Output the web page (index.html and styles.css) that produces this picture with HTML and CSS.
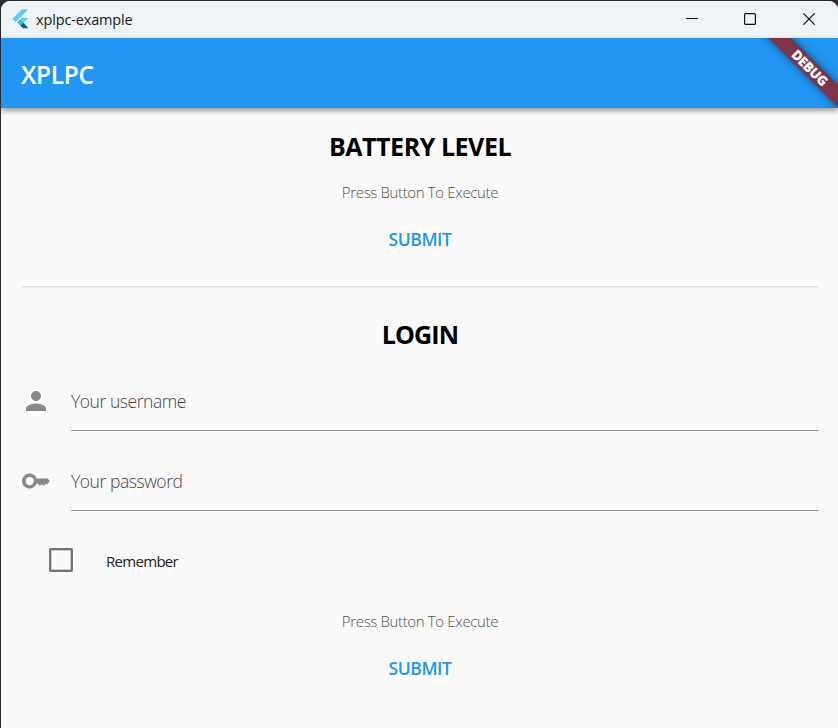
FILE: index.html
```html
<!DOCTYPE html>
<html lang="en">
<head>
<meta charset="utf-8">
<title>xplpc-example</title>
<link rel="stylesheet" href="styles.css">
</head>
<body>
<div class="window">
  <header class="titlebar">
    <svg class="logo" viewBox="0 0 18 20" width="18" height="20">
      <path d="M10 .3H16.3L3.6 13L.4 9.9Z" fill="#62c9f8"/>
      <path d="M10 9H16.3L8.6 16.6L5.4 13.6Z" fill="#62c9f8"/>
      <path d="M8.4 16.5L11.4 13.5L16.3 19.3H11Z" fill="#075b9d"/>
      <path d="M5.4 13.6L8.4 10.6L11.4 13.6L8.4 16.6Z" fill="#35b5f2"/>
    </svg>
    <span class="caption">xplpc-example</span>
    <div class="controls">
      <svg viewBox="0 0 12 12" width="12" height="12"><path d="M0 5.5H12"/></svg>
      <svg viewBox="0 0 12 12" width="12" height="12"><rect x=".6" y=".6" width="10.8" height="10.8" rx="1"/></svg>
      <svg viewBox="0 0 12 12" width="12" height="12"><path d="M.3 .3L11.7 11.7M11.7 .3L.3 11.7"/></svg>
    </div>
  </header>
  <div class="appbar">
    <h1>XPLPC</h1>
    <div class="corner"><div class="banner"><span>DEBUG</span></div></div>
  </div>
  <main>
    <h2 class="battery">BATTERY LEVEL</h2>
    <p class="hint">Press Button To Execute</p>
    <button>SUBMIT</button>
    <hr>
    <h2 class="login">LOGIN</h2>
    <label class="field">
      <svg viewBox="0 0 24 24" width="30" height="30"><path d="M12 12c2.21 0 4-1.79 4-4s-1.79-4-4-4-4 1.79-4 4 1.79 4 4 4zm0 2c-2.67 0-8 1.34-8 4v2h16v-2c0-2.66-5.33-4-8-4z"/></svg>
      <span class="input">Your username</span>
    </label>
    <label class="field">
      <svg viewBox="0 0 24 24" width="30" height="30"><path fill-rule="evenodd" d="M12.5 10A6 6 0 1 0 12.5 14H13.4L15 15.8L16.5 14.5L18 15.8L20 14.2L21 14.8L23 12L21.4 10ZM7 15.3A3.3 3.3 0 1 1 7 8.7A3.3 3.3 0 0 1 7 15.3Z"/></svg>
      <span class="input">Your password</span>
    </label>
    <label class="remember"><span class="box"></span><span>Remember</span></label>
    <p class="hint">Press Button To Execute</p>
    <button>SUBMIT</button>
  </main>
</div>
</body>
</html>
```
FILE: styles.css
```css
* { box-sizing: border-box; }
body {
  margin: 0;
  height: 728px;
  overflow: hidden;
  background: #2b2b2d;
  font-family: "Open Sans", "Noto Sans", sans-serif;
}
.window {
  margin: 1px 0 0 1px;
  height: 727px;
  background: #fafafa;
  border-radius: 9px 9px 0 0;
  overflow: hidden;
}
.titlebar {
  height: 37px;
  display: flex;
  align-items: center;
  background: #eff4f9;
  padding: 0 23px 1px 11px;
}
.logo { flex: none; }
.caption {
  margin-left: 6px;
  font-size: 14.5px;
  letter-spacing: -0.15px;
  color: #191919;
}
.controls {
  margin-left: auto;
  display: flex;
}
.controls svg {
  margin-left: 46px;
  fill: none;
  stroke: #111;
  stroke-width: 1.2;
}
.controls svg:last-child { margin-left: 47px; }
.appbar {
  position: relative;
  height: 70px;
  display: flex;
  align-items: center;
  padding: 2px 0 0 20px;
  background: #2196f3;
  box-shadow: 0 2px 5px rgba(0, 0, 0, .3), 0 4px 6px rgba(0, 0, 0, .14);
}
.appbar h1 {
  margin: 0;
  font-size: 24.5px;
  font-weight: 600;
  letter-spacing: -0.3px;
  color: #fff;
}
.corner {
  position: absolute;
  top: 0;
  right: 0;
  width: 110px;
  height: 70px;
  overflow: hidden;
}
.banner {
  position: absolute;
  left: 11px;
  top: 21px;
  width: 140px;
  height: 16px;
  display: flex;
  align-items: center;
  justify-content: center;
  padding-left: 2px;
  transform: rotate(45deg);
  background: #7d3348;
  box-shadow: 0 0 8px rgba(0, 0, 0, .5);
  color: #fff;
  font-size: 13.5px;
  font-weight: 800;
  letter-spacing: -0.4px;
  line-height: 15px;
}
main {
  display: flex;
  flex-direction: column;
  align-items: center;
  padding: 19px 19px 0 20px;
}
h2 {
  margin: 0;
  height: 38px;
  line-height: 38px;
  font-size: 25px;
  font-weight: 700;
  color: #000;
}
.battery { letter-spacing: -0.45px; }
.login { letter-spacing: -0.8px; }
.hint {
  margin: 17px 0 0;
  height: 20px;
  line-height: 20px;
  font-size: 15px;
  font-weight: 300;
  letter-spacing: -0.35px;
  color: #505050;
}
button {
  margin-top: 14px;
  height: 46px;
  padding: 0 10px;
  border: 0;
  background: none;
  font: 600 17.5px/45px "Open Sans", "Noto Sans", sans-serif;
  letter-spacing: -0.4px;
  color: #2196f3;
}
hr {
  width: 100%;
  height: 2px;
  margin: 24px 0 27px;
  border: 0;
  background: linear-gradient(#e0e0e0 50%, #f1f1f1 50%);
}
.field {
  width: 100%;
  height: 80px;
  display: flex;
  align-items: flex-start;
}
.login + .field { margin-top: 18px; }
.field svg {
  flex: none;
  margin-top: 15px;
  fill: #898989;
}
.input {
  flex: 1;
  margin-left: 20px;
  height: 60px;
  border-bottom: 1px solid #969696;
  font-size: 17.5px;
  font-weight: 300;
  letter-spacing: -0.45px;
  line-height: 61px;
  color: #444;
}
.remember {
  width: 100%;
  height: 40px;
  margin-top: 10px;
  display: flex;
  align-items: center;
  padding-left: 28px;
  font-size: 15px;
  letter-spacing: -0.7px;
  color: #222;
}
.box {
  width: 24px;
  height: 24px;
  margin: 0 33px 2px 0;
  border: 2px solid #757575;
  border-radius: 2px;
  box-shadow: inset 0 0 0 .5px #a0a0a0;
}
.remember + .hint { margin-top: 30px; }
```
